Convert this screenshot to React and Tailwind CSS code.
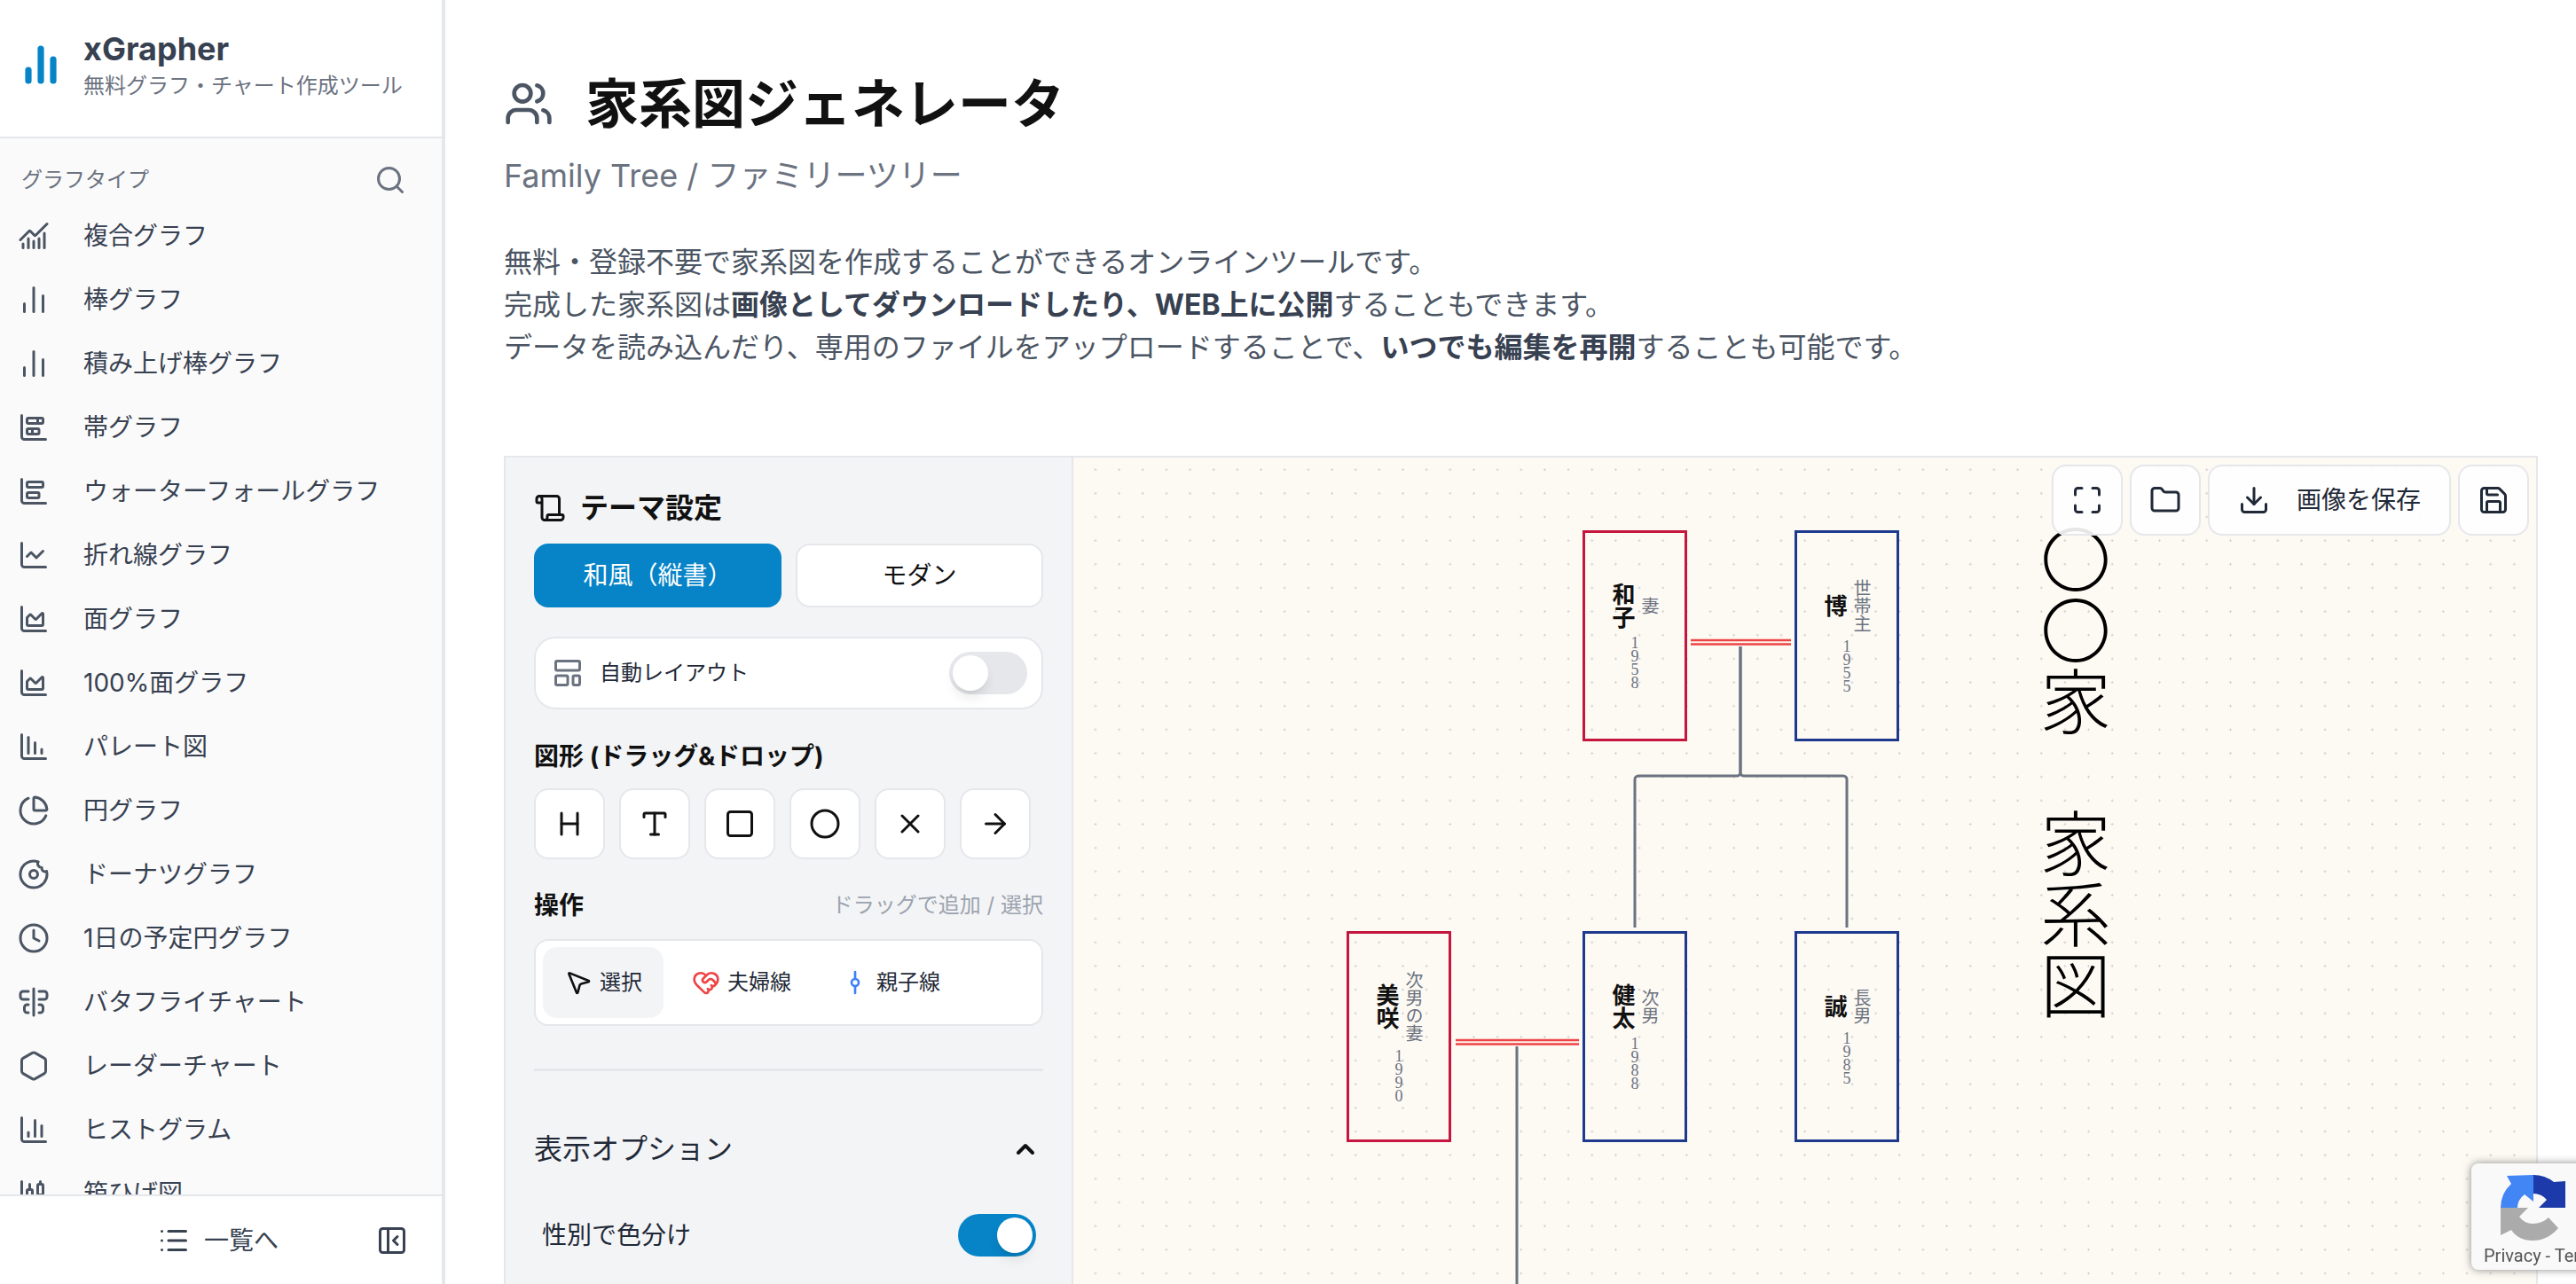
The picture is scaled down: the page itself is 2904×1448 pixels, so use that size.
import React from 'react';
import {
    AlignCenterVertical, ChartArea, ChartBarBig, ChartBarStacked, ChartCandlestick, ChartColumn,
    ChartColumnDecreasing, ChartLine, ChartNoAxesColumn, ChartNoAxesCombined, ChartPie, ChevronUp,
    Circle, Clock, Donut, Download, Folder, GitCommitVertical, Heading, HeartHandshake, Hexagon,
    LayoutTemplate, List, Maximize, MousePointer2, ArrowRight, PanelLeftClose, Save, Scroll, Search,
    Square, Type, Users, X,
} from 'lucide-react';

const chartTypes = [
    { label: '複合グラフ', icon: ChartNoAxesCombined },
    { label: '棒グラフ', icon: ChartNoAxesColumn },
    { label: '積み上げ棒グラフ', icon: ChartNoAxesColumn },
    { label: '帯グラフ', icon: ChartBarStacked },
    { label: 'ウォーターフォールグラフ', icon: ChartBarBig },
    { label: '折れ線グラフ', icon: ChartLine },
    { label: '面グラフ', icon: ChartArea },
    { label: '100%面グラフ', icon: ChartArea },
    { label: 'パレート図', icon: ChartColumnDecreasing },
    { label: '円グラフ', icon: ChartPie },
    { label: 'ドーナツグラフ', icon: Donut },
    { label: '1日の予定円グラフ', icon: Clock },
    { label: 'バタフライチャート', icon: AlignCenterVertical },
    { label: 'レーダーチャート', icon: Hexagon },
    { label: 'ヒストグラム', icon: ChartColumn },
    { label: '箱ひげ図', icon: ChartCandlestick },
];

const shapes = [Heading, Type, Square, Circle, X, ArrowRight];

// positions are canvas coordinates
const people = [
    { name: '和子', role: '妻', year: '1958', pos: 'left-[574px] top-[82px]', border: 'border-[#c4163f]' },
    { name: '博', role: '世帯主', year: '1955', pos: 'left-[813px] top-[82px]', border: 'border-[#1e3a8f]' },
    { name: '美咲', role: '次男の妻', year: '1990', pos: 'left-[308px] top-[534px]', border: 'border-[#c4163f]' },
    { name: '健太', role: '次男', year: '1988', pos: 'left-[574px] top-[534px]', border: 'border-[#1e3a8f]' },
    { name: '誠', role: '長男', year: '1985', pos: 'left-[813px] top-[534px]', border: 'border-[#1e3a8f]' },
];

const Toggle = ({ on }) => (
    <div className={`w-[88px] h-12 rounded-full p-1 flex ${on ? 'bg-[#0784c7] justify-end' : 'bg-[#e5e7eb] justify-start'}`}>
        <div className="w-10 h-10 rounded-full bg-white shadow-[0_10px_15px_-3px_rgba(0,0,0,0.1),0_4px_6px_-4px_rgba(0,0,0,0.1)]" />
    </div>
);

const PersonCard = ({ person }) => (
    <div className={`absolute ${person.pos} w-[118px] h-[238px] border-[3px] ${person.border} flex flex-col items-center justify-center`}>
        <div className="flex items-center gap-[6px]">
            <div className="[writing-mode:vertical-rl] text-[26px] leading-[26px] w-[26px] font-bold text-[#111111]">{person.name}</div>
            <div className="[writing-mode:vertical-rl] text-[20px] leading-[24px] w-6 text-[#6b7280]">{person.role}</div>
        </div>
        <div className="mt-[9px] flex flex-col items-center text-[18px] leading-[15px] text-[#6b7280] font-['Liberation_Serif',serif]">
            {person.year.split('').map((digit, index) => (
                <span key={index}>{digit}</span>
            ))}
        </div>
    </div>
);

const Sidebar = () => (
    <aside className="w-[502px] h-full shrink-0 flex flex-col bg-[#fafafa] border-r-4 border-[#e5e7eb]">
        <div className="h-[156px] shrink-0 bg-white border-b-2 border-[#e5e7eb] flex items-center pl-[22px] gap-6 pb-2">
            <ChartNoAxesColumn size={48} strokeWidth={3.6} className="text-[#0784c7]" />
            <div>
                <div className="text-[36px] leading-[44px] font-bold text-[#374151]">xGrapher</div>
                <div className="text-[24px] leading-[34px] text-[#6b7280] mt-[3px]">無料グラフ・チャート作成ツール</div>
            </div>
        </div>
        <div className="flex-1 min-h-0 overflow-hidden">
            <div className="h-[74px] pt-5 pl-6 pr-10 flex items-center justify-between">
                <span className="text-[24px] text-[#6b7280]">グラフタイプ</span>
                <Search size={36} strokeWidth={2} className="text-[#6b7280]" />
            </div>
            {chartTypes.map((item, index) => {
                const Icon = item.icon;
                return (
                    <div key={index} className="h-[72px] pl-5 flex items-center gap-[38px]">
                        <Icon size={36} strokeWidth={2} className="text-[#4b5563] shrink-0" />
                        <span className="text-[28px] text-[#374151] whitespace-nowrap">{item.label}</span>
                    </div>
                );
            })}
        </div>
        <div className="h-[101px] shrink-0 bg-white border-t-2 border-[#e5e7eb] relative flex items-center justify-center pr-[6px]">
            <div className="flex items-center gap-4 text-[#374151]">
                <List size={36} strokeWidth={2} />
                <span className="text-[28px]">一覧へ</span>
            </div>
            <PanelLeftClose size={36} strokeWidth={2} className="absolute left-[424px] top-8 text-[#374151]" />
        </div>
    </aside>
);

const ControlPanel = () => (
    <div className="w-[640px] shrink-0 bg-[#f3f4f6] border-r-2 border-[#e5e7eb] pl-8 pr-[32px] pt-[37px]">
        {/* Theme */}
        <div className="h-10 flex items-center gap-4 text-[#111111]">
            <Scroll size={36} strokeWidth={2} />
            <h2 className="text-[32px] font-bold">テーマ設定</h2>
        </div>
        <div className="grid grid-cols-2 gap-4 mt-5">
            <button className="h-[72px] rounded-2xl bg-[#0784c7] text-white text-[28px]">和風（縦書）</button>
            <button className="h-[72px] rounded-2xl bg-white border-2 border-[#e5e7eb] text-[#111111] text-[28px]">モダン</button>
        </div>
        <div className="h-[82px] mt-[33px] rounded-3xl bg-white border-2 border-[#e5e7eb] pl-[18px] pr-[16px] flex items-center justify-between">
            <div className="flex items-center gap-[18px]">
                <LayoutTemplate size={36} strokeWidth={2} className="text-[#6b7280]" />
                <span className="text-[24px] text-[#1f2937]">自動レイアウト</span>
            </div>
            <Toggle on={false} />
        </div>

        {/* Shapes */}
        <h3 className="text-[28px] font-bold leading-10 mt-[33px] text-[#111111]">図形 (ドラッグ&ドロップ)</h3>
        <div className="flex gap-4 mt-4">
            {shapes.map((Icon, index) => (
                <div key={index} className="w-20 h-20 rounded-2xl bg-white border-2 border-[#e5e7eb] flex items-center justify-center text-[#111111]">
                    <Icon size={36} strokeWidth={2} />
                </div>
            ))}
        </div>

        {/* Tools */}
        <div className="flex items-center justify-between mt-[32px] h-10">
            <h3 className="text-[28px] font-bold text-[#111111]">操作</h3>
            <span className="text-[24px] text-[#9ca3af]">ドラッグで追加 / 選択</span>
        </div>
        <div className="h-[98px] mt-[18px] rounded-2xl bg-white border-2 border-[#e5e7eb] pl-2 flex items-center gap-2 text-[#1f2937]">
            <div className="h-20 px-6 rounded-2xl bg-[#f3f4f6] flex items-center gap-2">
                <MousePointer2 size={32} strokeWidth={2} className="text-[#111111]" />
                <span className="text-[24px]">選択</span>
            </div>
            <div className="h-20 px-6 rounded-2xl flex items-center gap-2">
                <HeartHandshake size={32} strokeWidth={2} className="text-[#ef4444]" />
                <span className="text-[24px]">夫婦線</span>
            </div>
            <div className="h-20 px-6 rounded-2xl flex items-center gap-2">
                <GitCommitVertical size={32} strokeWidth={2} className="text-[#3b82f6]" />
                <span className="text-[24px]">親子線</span>
            </div>
        </div>

        <div className="h-[3px] bg-[#e5e7eb] mt-12" />

        {/* Display options */}
        <div className="flex items-center justify-between mt-[66px] h-11 pr-1">
            <span className="text-[32px] text-[#1f2937]">表示オプション</span>
            <ChevronUp size={32} strokeWidth={3} className="text-[#111111]" />
        </div>
        <div className="flex flex-col gap-8 mt-[51px] pl-[9px] pr-[-8px] w-[566px]">
            <div className="flex items-center justify-between">
                <span className="text-[28px] text-[#1f2937]">性別で色分け</span>
                <Toggle on />
            </div>
            <div className="flex items-center justify-between">
                <span className="text-[28px] text-[#1f2937]">生年を表示</span>
                <Toggle on={false} />
            </div>
        </div>
    </div>
);

const Canvas = () => (
    <div className="relative flex-1 min-w-0 bg-[#fdf9f3] bg-[radial-gradient(#d4d4d4_1px,transparent_1.2px)] bg-[size:26.67px_26.67px] bg-[position:11.67px_0.33px] overflow-hidden">
        {/* Family lines */}
        <svg className="absolute left-0 top-0 w-[1651px] h-[932px]" viewBox="0 0 1651 932" fill="none">
            <path d="M696 206H809M696 210.5H809" stroke="#ef4444" strokeWidth="2.6" />
            <path d="M431 657H570M431 661.5H570" stroke="#ef4444" strokeWidth="2.6" />
            <path d="M752 213V355a4 4 0 0 1 -4 4H637a4 4 0 0 0 -4 4V530" stroke="#6b7280" strokeWidth="3" />
            <path d="M752 213V355a4 4 0 0 0 4 4H868a4 4 0 0 1 4 4V530" stroke="#6b7280" strokeWidth="3" />
            <path d="M500 664V932" stroke="#6b7280" strokeWidth="3" />
        </svg>

        {people.map((person) => (
            <PersonCard key={person.name} person={person} />
        ))}

        <div className="absolute left-[1090px] top-[75px] [writing-mode:vertical-rl] text-[80px] leading-[80px] whitespace-pre text-black font-['Noto_Sans_CJK_JP',serif] font-light">
            〇〇家　家系図
        </div>

        {/* Toolbar */}
        <div className="absolute right-[8px] top-[8px] flex gap-2 text-[#1f2937]">
            <div className="w-20 h-20 rounded-2xl bg-white/90 border-2 border-[#e5e7eb] flex items-center justify-center">
                <Maximize size={36} strokeWidth={2} />
            </div>
            <div className="w-20 h-20 rounded-2xl bg-white/90 border-2 border-[#e5e7eb] flex items-center justify-center">
                <Folder size={36} strokeWidth={2} />
            </div>
            <div className="h-20 px-8 rounded-2xl bg-white/90 border-2 border-[#e5e7eb] flex items-center gap-[30px]">
                <Download size={36} strokeWidth={2} />
                <span className="text-[28px]">画像を保存</span>
            </div>
            <div className="w-20 h-20 rounded-2xl bg-white/90 border-2 border-[#e5e7eb] flex items-center justify-center">
                <Save size={36} strokeWidth={2} />
            </div>
        </div>
    </div>
);

const RecaptchaBadge = () => (
    <div className="fixed left-[2786px] top-[1312px] w-[512px] h-[120px] rounded-lg bg-[#f9f9f9] shadow-[0_0_10px_rgba(128,128,128,0.9)] overflow-hidden">
        <svg className="absolute left-[33px] top-[13px] w-[74px] h-[74px]" viewBox="0 0 74 74">
            <path d="M37 0Q50 0 60 8L73 7V37H43L52 28Q46 21 37 21Z" fill="#1c3aa9" />
            <path d="M0 37Q0 21 12 10L7 1L37 0V30L27 22Q19 28 19 37Z" fill="#4285f4" />
            <path d="M0 37H31L21 47Q27 55 36 55Q47 55 54 48L65 60Q53 74 36 74Q20 74 12 62L0 68Z" fill="#ababab" />
        </svg>
        <div className="absolute left-[14px] top-[90px] text-[20px] leading-7 text-[#555555] whitespace-nowrap font-['Roboto',sans-serif]">Privacy - Terms</div>
    </div>
);

const App = () => {
    return (
        <div className="h-screen overflow-hidden flex bg-white text-[#111827] font-['Inter','Noto_Sans_CJK_JP',sans-serif]">
            <Sidebar />
            <main className="flex-1 min-w-0 pl-[66px] pr-[43px] pt-[87px] overflow-hidden">
                <div className="flex items-center gap-[36px] h-[60px]">
                    <Users size={56} strokeWidth={2} className="text-[#4b5563]" />
                    <h1 className="text-[60px] leading-[60px] font-bold text-[#111111]">家系図ジェネレータ</h1>
                </div>
                <p className="text-[36px] leading-[48px] text-[#6b7280] mt-[27px]">Family Tree / ファミリーツリー</p>
                <div className="text-[32px] leading-[48px] text-[#4b5563] mt-[50px]">
                    <p>無料・登録不要で家系図を作成することができるオンラインツールです。</p>
                    <p>完成した家系図は<strong className="font-bold text-[#374151]">画像としてダウンロードしたり、WEB上に公開</strong>することもできます。</p>
                    <p>データを読み込んだり、専用のファイルをアップロードすることで、<strong className="font-bold text-[#374151]">いつでも編集を再開</strong>することも可能です。</p>
                </div>
                <div className="mt-[98px] h-[1000px] border-2 border-[#e5e7eb] flex">
                    <ControlPanel />
                    <Canvas />
                </div>
            </main>
            <RecaptchaBadge />
        </div>
    );
};

export default App;
